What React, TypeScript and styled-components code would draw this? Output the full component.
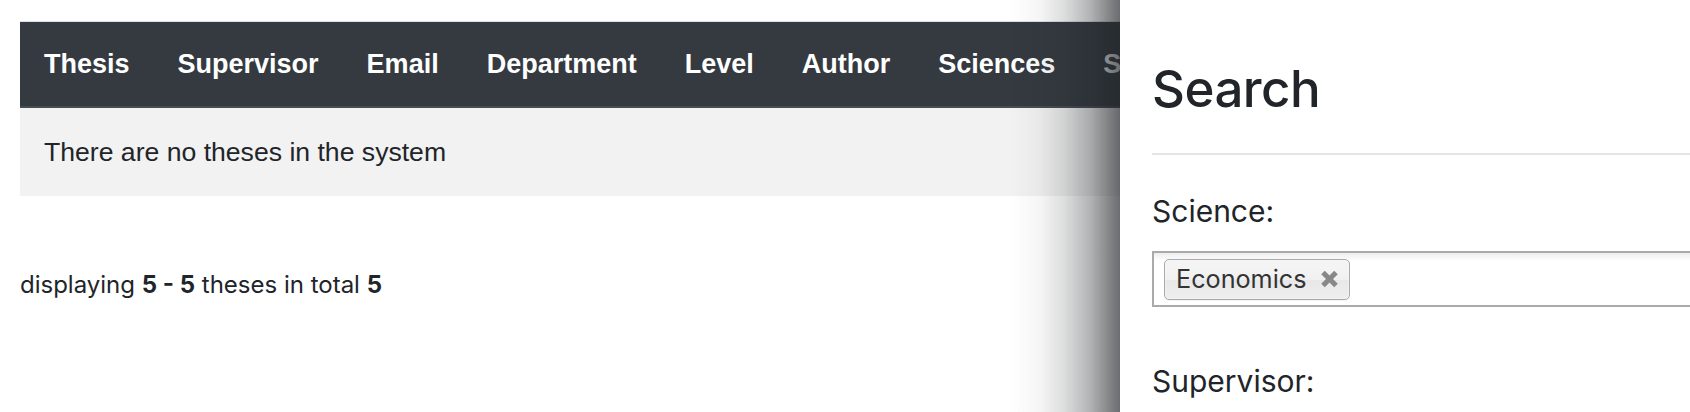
import React from 'react';
import styled, { createGlobalStyle } from 'styled-components';

const GlobalStyle = createGlobalStyle`
  html, body {
    margin: 0;
    padding: 0;
    overflow: hidden;
    background: #fff;
    color: #212529;
  }
`;

const Page = styled.div`
  padding: 21px 20px 0;
  font-family: Inter, 'Noto Sans', sans-serif;
`;

const TableWrap = styled.div`
  overflow: hidden;
`;

const Table = styled.table`
  width: max-content;
  border-collapse: collapse;
  font-family: 'Liberation Sans', Arial, sans-serif;
  font-size: 27px;
  line-height: 40px;
  border-top: 1px solid #dee2e6;
`;

const Th = styled.th`
  background: #343a40;
  color: #fff;
  font-weight: 700;
  text-align: left;
  white-space: nowrap;
  padding: 22px 24px;
  border-bottom: 2px solid #454d55;
`;

const Td = styled.td`
  background: #f2f2f2;
  padding: 24px;
  font-size: 26.6px;
  text-align: left;
`;

const Summary = styled.p`
  margin: 71px 0 0;
  font-size: 24px;
  line-height: 36px;
  color: #212529;

  b {
    font-weight: 700;
  }
`;

const Panel = styled.aside`
  position: fixed;
  top: 0;
  bottom: 0;
  left: 1120px;
  width: 700px;
  background: #fff;
  padding: 57px 0 0 32px;
  box-sizing: border-box;
  font-family: Inter, 'Noto Sans', sans-serif;

  &::before {
    content: '';
    position: absolute;
    top: 0;
    bottom: 0;
    right: 100%;
    width: 110px;
    background: linear-gradient(
      to right,
      rgba(33, 37, 41, 0) 0%,
      rgba(33, 37, 41, 0.045) 27%,
      rgba(33, 37, 41, 0.16) 50%,
      rgba(33, 37, 41, 0.35) 73%,
      rgba(33, 37, 41, 0.57) 91%,
      rgba(33, 37, 41, 0.67) 100%
    );
  }
`;

const Heading = styled.h2`
  margin: 0;
  font-size: 51px;
  font-weight: 500;
  line-height: 64px;
  letter-spacing: -0.5px;
  color: #212529;
`;

const Rule = styled.hr`
  margin: 32px 0 36px;
  border: 0;
  border-top: 2px solid #e5e5e5;
`;

const Field = styled.div`
  margin-bottom: 54px;
`;

const Label = styled.label`
  display: block;
  font-size: 30px;
  line-height: 40px;
  margin-bottom: 20px;
  color: #212529;
`;

const Choices = styled.div`
  display: flex;
  align-items: center;
  height: 56px;
  box-sizing: border-box;
  border: 2px solid #aaa;
  border-right: 0;
  padding: 0 10px;
  background-image: linear-gradient(#eee 1%, #fff 15%);
`;

const Choice = styled.span`
  display: inline-flex;
  align-items: center;
  gap: 14px;
  height: 41px;
  box-sizing: border-box;
  padding: 0 10px 0 11px;
  border: 1px solid #aaa;
  border-radius: 5px;
  background-image: linear-gradient(#f4f4f4 20%, #f0f0f0 50%, #e8e8e8 52%, #eee 100%);
  box-shadow: 0 0 2px #fff inset, 0 1px 0 rgba(0, 0, 0, 0.05);
  font-size: 25.2px;
  color: #333;
`;

const columns = ['Thesis', 'Supervisor', 'Email', 'Department', 'Level', 'Author', 'Sciences', 'Status', 'Actions'];

function CloseIcon() {
  return (
    <svg width="19" height="18" viewBox="0 0 19 18" aria-hidden="true">
      <path d="M3 2.5 L16 15.5 M16 2.5 L3 15.5" stroke="#888" strokeWidth="5" strokeLinecap="butt" />
    </svg>
  );
}

export default function App() {
  return (
    <>
      <GlobalStyle />
      <Page>
        <TableWrap>
          <Table>
            <thead>
              <tr>
                {columns.map((c) => (
                  <Th key={c}>{c}</Th>
                ))}
              </tr>
            </thead>
            <tbody>
              <tr>
                <Td colSpan={columns.length}>There are no theses in the system</Td>
              </tr>
            </tbody>
          </Table>
        </TableWrap>
        <Summary>
          displaying <b>5 - 5</b> theses in total <b>5</b>
        </Summary>
      </Page>
      <Panel>
        <Heading>Search</Heading>
        <Rule />
        <Field>
          <Label>Science:</Label>
          <Choices>
            <Choice>
              Economics
              <CloseIcon />
            </Choice>
          </Choices>
        </Field>
        <Field>
          <Label>Supervisor:</Label>
        </Field>
      </Panel>
    </>
  );
}
